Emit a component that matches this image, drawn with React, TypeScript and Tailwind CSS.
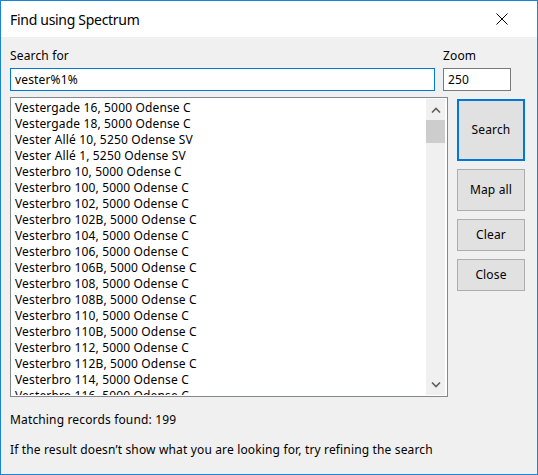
const items = [
  "Vestergade 16, 5000 Odense C",
  "Vestergade 18, 5000 Odense C",
  "Vester Allé 10, 5250 Odense SV",
  "Vester Allé 1, 5250 Odense SV",
  "Vesterbro 10, 5000 Odense C",
  "Vesterbro 100, 5000 Odense C",
  "Vesterbro 102, 5000 Odense C",
  "Vesterbro 102B, 5000 Odense C",
  "Vesterbro 104, 5000 Odense C",
  "Vesterbro 106, 5000 Odense C",
  "Vesterbro 106B, 5000 Odense C",
  "Vesterbro 108, 5000 Odense C",
  "Vesterbro 108B, 5000 Odense C",
  "Vesterbro 110, 5000 Odense C",
  "Vesterbro 110B, 5000 Odense C",
  "Vesterbro 112, 5000 Odense C",
  "Vesterbro 112B, 5000 Odense C",
  "Vesterbro 114, 5000 Odense C",
  "Vesterbro 116, 5000 Odense C",
];

const font = { fontFamily: '"Noto Sans", "Liberation Sans", sans-serif' };

function WinButton({ label, className }: { label: string; className: string }) {
  return (
    <button
      className={
        "flex w-[68px] items-center justify-center bg-[#e1e1e1] text-[12px] tracking-[0.15px] text-black " +
        className
      }
    >
      {label}
    </button>
  );
}

export default function App() {
  return (
    <div
      className="flex h-[475px] w-[538px] flex-col border border-[#1883d7] bg-[#f0f0f0] text-[12px] leading-[16px] tracking-[0.15px] text-black"
      style={font}
    >
      <div className="flex h-[36px] shrink-0 items-center justify-between bg-white pl-[9px] pr-[29px]">
        <span className="pt-[1px] text-[14px] leading-[20px] tracking-[-0.3px]">Find using Spectrum</span>
        <svg width="12" height="12" viewBox="0 0 12 12" className="text-black">
          <path d="M0.5 0.5 L11.5 11.5 M11.5 0.5 L0.5 11.5" stroke="currentColor" strokeWidth="1" />
        </svg>
      </div>

      <div className="flex flex-1 flex-col pl-[9px] pt-[11px]">
        <div className="flex gap-[8px]">
          <div className="flex w-[425px] flex-col gap-[4px]">
            <span>Search for</span>
            <div className="flex h-[23px] items-center border border-[#0078d7] bg-white pl-[4px]">
              vester%1%
            </div>
          </div>
          <div className="flex w-[68px] flex-col gap-[4px]">
            <span>Zoom</span>
            <div className="flex h-[23px] items-center border border-[#7a7a7a] bg-white pl-[4px]">
              250
            </div>
          </div>
        </div>

        <div className="mt-[6px] flex gap-[9px]">
          <div className="flex h-[300px] w-[438px] border border-[#828790] bg-white p-[1px]">
            <div className="flex-1 overflow-hidden pl-[3px] pt-[1px]">
              {items.map((item) => (
                <div key={item} className="h-[16px] whitespace-nowrap">
                  {item}
                </div>
              ))}
            </div>
            <div className="mr-[1px] flex w-[19px] flex-col bg-[#f0f0f0]">
              <div className="flex h-[21px] items-center justify-center">
                <svg width="10" height="6" viewBox="0 0 10 6">
                  <path d="M1 5.5 L5 1.5 L9 5.5" fill="none" stroke="#606060" strokeWidth="1.6" />
                </svg>
              </div>
              <div className="h-[23px] bg-[#cdcdcd]" />
              <div className="flex-1" />
              <div className="flex h-[21px] items-center justify-center">
                <svg width="10" height="6" viewBox="0 0 10 6">
                  <path d="M1 0.5 L5 4.5 L9 0.5" fill="none" stroke="#606060" strokeWidth="1.6" />
                </svg>
              </div>
            </div>
          </div>

          <div className="flex flex-col gap-[8px] pt-[2px]">
            <WinButton label="Search" className="h-[62px] border-2 border-[#0078d7]" />
            <WinButton label="Map all" className="h-[42px] border border-[#adadad]" />
            <WinButton label="Clear" className="h-[32px] border border-[#adadad]" />
            <WinButton label="Close" className="h-[32px] border border-[#adadad]" />
          </div>
        </div>

        <p className="mt-[15px]">Matching records found: 199</p>
        <p className="mt-[14px]">If the result doesn’t show what you are looking for, try refining the search</p>
      </div>
    </div>
  );
}
